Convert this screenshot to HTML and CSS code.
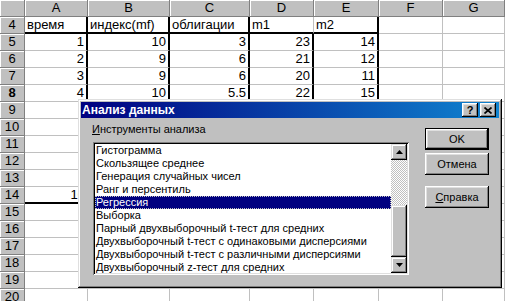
FILE: index.html
```html
<!DOCTYPE html>
<html>
<head>
<meta charset="utf-8">
<link rel="stylesheet" href="styles.css">
</head>
<body>
<div class="sheet">
  <div class="hd"></div><div class="hd">A</div><div class="hd">B</div><div class="hd">C</div><div class="hd">D</div><div class="hd">E</div><div class="hd">F</div><div class="hd">G</div>

  <div class="rh">4</div><div class="c tr tb">время</div><div class="c tr tb">индекс(mf)</div><div class="c tr tb">облигации</div><div class="c tb">m1</div><div class="c tr tb">m2</div><div class="c"></div><div class="c"></div>
  <div class="rh">5</div><div class="c n tr">1</div><div class="c n tr">10</div><div class="c n tr">3</div><div class="c n tr">23</div><div class="c n tr">14</div><div class="c"></div><div class="c"></div>
  <div class="rh">6</div><div class="c n tr">2</div><div class="c n tr">9</div><div class="c n tr">6</div><div class="c n tr">21</div><div class="c n tr">12</div><div class="c"></div><div class="c"></div>
  <div class="rh">7</div><div class="c n tr">3</div><div class="c n tr">9</div><div class="c n tr">6</div><div class="c n tr">20</div><div class="c n tr">11</div><div class="c"></div><div class="c"></div>
  <div class="rh b">8</div><div class="c n tr">4</div><div class="c n tr">10</div><div class="c n tr">5.5</div><div class="c n tr">22</div><div class="c n tr">15</div><div class="c"></div><div class="c"></div>
  <div class="rh">9</div><div class="c"></div><div class="c"></div><div class="c"></div><div class="c"></div><div class="c"></div><div class="c"></div><div class="c"></div>
  <div class="rh">10</div><div class="c"></div><div class="c"></div><div class="c"></div><div class="c"></div><div class="c"></div><div class="c"></div><div class="c"></div>
  <div class="rh">11</div><div class="c"></div><div class="c"></div><div class="c"></div><div class="c"></div><div class="c"></div><div class="c"></div><div class="c"></div>
  <div class="rh">12</div><div class="c"></div><div class="c"></div><div class="c"></div><div class="c"></div><div class="c"></div><div class="c"></div><div class="c"></div>
  <div class="rh">13</div><div class="c"></div><div class="c"></div><div class="c"></div><div class="c"></div><div class="c"></div><div class="c"></div><div class="c"></div>
  <div class="rh">14</div><div class="c n tb">10</div><div class="c"></div><div class="c"></div><div class="c"></div><div class="c"></div><div class="c"></div><div class="c"></div>
  <div class="rh">15</div><div class="c"></div><div class="c"></div><div class="c"></div><div class="c"></div><div class="c"></div><div class="c"></div><div class="c"></div>
  <div class="rh">16</div><div class="c"></div><div class="c"></div><div class="c"></div><div class="c"></div><div class="c"></div><div class="c"></div><div class="c"></div>
  <div class="rh">17</div><div class="c"></div><div class="c"></div><div class="c"></div><div class="c"></div><div class="c"></div><div class="c"></div><div class="c"></div>
  <div class="rh">18</div><div class="c"></div><div class="c"></div><div class="c"></div><div class="c"></div><div class="c"></div><div class="c"></div><div class="c"></div>
  <div class="rh">19</div><div class="c"></div><div class="c"></div><div class="c"></div><div class="c"></div><div class="c"></div><div class="c"></div><div class="c"></div>
  <div class="rh">20</div><div class="c"></div><div class="c"></div><div class="c"></div><div class="c"></div><div class="c"></div><div class="c"></div><div class="c"></div>
</div>

<div class="dlg">
  <div class="title">
    <span class="ttext">Анализ данных</span>
    <div class="tbtns">
      <div class="tbtn q">?</div>
      <div class="tbtn"><svg width="8" height="7" viewBox="0 0 8 7"><path d="M0.5 0.5L7.5 6.5M7.5 0.5L0.5 6.5" stroke="#000" stroke-width="1.7" fill="none"/></svg></div>
    </div>
  </div>
  <div class="body">
    <div class="left">
      <div class="lbl"><u>И</u>нструменты анализа</div>
      <div class="listbox">
        <div class="items">
          <div class="it">Гистограмма</div>
          <div class="it">Скользящее среднее</div>
          <div class="it">Генерация случайных чисел</div>
          <div class="it">Ранг и персентиль</div>
          <div class="it sel">Регрессия</div>
          <div class="it">Выборка</div>
          <div class="it">Парный двухвыборочный t-тест для средних</div>
          <div class="it">Двухвыборочный t-тест с одинаковыми дисперсиями</div>
          <div class="it">Двухвыборочный t-тест с различными дисперсиями</div>
          <div class="it">Двухвыборочный z-тест для средних</div>
        </div>
        <div class="sb">
          <div class="sbtn"><svg width="7" height="4" viewBox="0 0 7 4"><polygon points="0,4 7,4 3.5,0" fill="#000"/></svg></div>
          <div class="track"></div>
          <div class="thumb"></div>
          <div class="sbtn"><svg width="7" height="4" viewBox="0 0 7 4"><polygon points="0,0 7,0 3.5,4" fill="#000"/></svg></div>
        </div>
      </div>
    </div>
    <div class="btns">
      <div class="btn def">OK</div>
      <div class="btn">Отмена</div>
      <div class="btn help"><u>С</u>правка</div>
    </div>
  </div>
</div>
</body>
</html>
```

FILE: styles.css
```css
* { box-sizing: border-box; }
body {
  margin: 0;
  width: 505px;
  height: 301px;
  overflow: hidden;
  position: relative;
  background: #fff;
  font-family: "Liberation Sans", Arial, sans-serif;
  color: #000;
}
.sheet {
  display: grid;
  grid-template-columns: 25px 63px 82px 80px 64px 65px 64px 62px;
  grid-auto-rows: 17px;
}
.hd, .rh {
  background: #c0c0c0;
  border-right: 1px solid #808080;
  border-bottom: 1px solid #808080;
  box-shadow: inset 1px 1px #fff;
  text-align: center;
  font-size: 13px;
  line-height: 16px;
}
.rh.b { font-weight: bold; }
.c {
  border-right: 1px solid #c0c0c0;
  border-bottom: 1px solid #c0c0c0;
  font-size: 13px;
  line-height: 16px;
  padding: 0 2px;
  white-space: nowrap;
}
.n { text-align: right; }
.tr { border-right: 2px solid #000; }
.tb { border-bottom: 2px solid #000; }

.dlg {
  position: absolute;
  left: 78px;
  top: 99px;
  width: 424px;
  height: 189px;
  background: #c0c0c0;
  padding: 3px;
  box-shadow: inset -1px -1px #000, inset 1px 1px #dfdfdf, inset -2px -2px #808080, inset 2px 2px #fff;
  font-size: 11px;
  display: flex;
  flex-direction: column;
}
.title {
  height: 16px;
  background: linear-gradient(90deg, #000080, #1084d0);
  display: flex;
  align-items: center;
  justify-content: space-between;
  padding: 0 3px 0 1px;
}
.ttext {
  color: #fff;
  font-weight: bold;
  font-size: 12px;
}
.tbtns { display: flex; gap: 2px; }
.tbtn {
  width: 16px;
  height: 14px;
  background: #c0c0c0;
  box-shadow: inset -1px -1px #000, inset 1px 1px #fff, inset -2px -2px #808080, inset 2px 2px #dfdfdf;
  display: flex;
  align-items: center;
  justify-content: center;
}
.tbtn.q {
  font-weight: bold;
  font-size: 11px;
  line-height: 14px;
}
.body {
  display: flex;
  padding: 0 10px 0 11px;
}
.left {
  width: 317px;
  padding-top: 5px;
}
.lbl {
  line-height: 13px;
  height: 13px;
}
.listbox {
  margin: 6px 0 0 1px;
  width: 316px;
  height: 133px;
  background: #fff;
  padding: 2px;
  box-shadow: inset 1px 1px #808080, inset -1px -1px #fff, inset 2px 2px #000, inset -2px -2px #dfdfdf;
  display: flex;
}
.items {
  flex: 1;
  overflow: hidden;
}
.it {
  height: 13px;
  line-height: 12px;
  padding-left: 1px;
  white-space: nowrap;
}
.it.sel {
  background: #000080;
  color: #fff;
  outline: 1px dotted #c0c0c0;
  outline-offset: -1px;
}
.sb {
  width: 16px;
  display: flex;
  flex-direction: column;
}
.sbtn {
  height: 16px;
  background: #c0c0c0;
  box-shadow: inset -1px -1px #000, inset 1px 1px #dfdfdf, inset -2px -2px #808080, inset 2px 2px #fff;
  display: flex;
  align-items: center;
  justify-content: center;
}
.track {
  height: 45px;
  background: repeating-conic-gradient(#c0c0c0 0 25%, #fff 0 50%) 0 0 / 2px 2px;
}
.thumb {
  flex: 1;
  background: #c0c0c0;
  box-shadow: inset -1px -1px #000, inset 1px 1px #dfdfdf, inset -2px -2px #808080, inset 2px 2px #fff;
}
.btns {
  margin-left: 16px;
  width: 64px;
  padding-top: 10px;
  display: flex;
  flex-direction: column;
}
.btn {
  height: 22px;
  line-height: 22px;
  text-align: center;
  background: #c0c0c0;
  box-shadow: inset -1px -1px #000, inset 1px 1px #fff, inset -2px -2px #808080, inset 2px 2px #dfdfdf;
  margin-bottom: 3px;
}
.btn.def {
  border: 1px solid #000;
  line-height: 20px;
}
.btn.help { margin-top: 8px; }
```
